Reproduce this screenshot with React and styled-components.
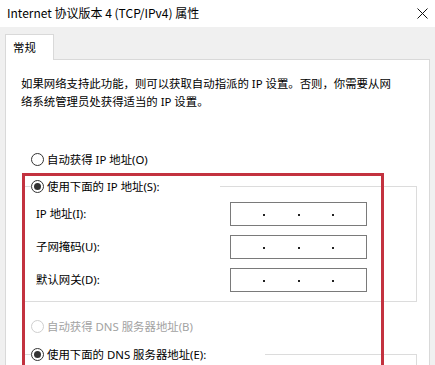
import React from "react";
import styled, { createGlobalStyle } from "styled-components";

const Global = createGlobalStyle`
  html, body { margin: 0; padding: 0; }
  body {
    background: #f0f0f0;
    font-family: "Noto Sans", "Noto Sans CJK SC", sans-serif;
    font-size: 11.4px;
    color: #000;
  }
`;

const Window = styled.div`
  position: relative;
  width: 435px;
  background: #f0f0f0;
  overflow: hidden;
`;

const TitleBar = styled.div`
  height: 27px;
  background: #fff;
  display: flex;
  align-items: center;
  justify-content: space-between;
  padding: 0 7px;
  box-sizing: border-box;
`;

const Title = styled.span`
  font-family: "Noto Sans CJK SC", sans-serif;
  font-size: 12px;
  line-height: 16px;
  color: #000;
  margin-top: -1px;
`;

const CloseIcon = styled.svg`
  width: 11px;
  height: 11px;
  display: block;
`;

const TabStrip = styled.div`
  display: flex;
  padding: 7px 5px 0;
`;

const Tab = styled.div`
  position: relative;
  z-index: 1;
  width: 49px;
  height: 26px;
  box-sizing: border-box;
  margin-bottom: -1px;
  padding: 5px 0 0 7px;
  background: #fff;
  border: 1px solid #d9d9d9;
  border-bottom: none;
  line-height: 16px;
`;

const Panel = styled.div`
  margin: 0 5px;
  border: 1px solid #d9d9d9;
  background: #fff;
  padding: 15px 12px 30px 15px;
`;

const Description = styled.p`
  margin: 0;
  line-height: 18px;
`;

const RadioRow = styled.label`
  display: flex;
  align-items: center;
  height: 20px;
  margin: ${(p) => p.$mt || 0}px 0 0 ${(p) => p.$ml || 0}px;
  color: ${(p) => (p.$disabled ? "#a2a2a2" : "#000")};
  background: ${(p) => (p.$legend ? "#fff" : "transparent")};
  width: ${(p) => (p.$width ? `${p.$width}px` : "auto")};
`;

const Circle = styled.span`
  box-sizing: border-box;
  width: 13px;
  height: 13px;
  border-radius: 50%;
  border: 1px solid ${(p) => (p.$disabled ? "#cfcfcf" : "#333")};
  margin-right: 3px;
  display: flex;
  align-items: center;
  justify-content: center;
  flex: none;
  &::after {
    content: "";
    display: ${(p) => (p.$checked ? "block" : "none")};
    width: 7px;
    height: 7px;
    border-radius: 50%;
    background: #333;
  }
`;

const Group = styled.fieldset`
  margin: ${(p) => p.$mt}px 0 0 3px;
  padding: 0 0 ${(p) => p.$pb}px 6px;
  border: 1px solid #dcdcdc;
  min-inline-size: 0;
`;

const Legend = styled.legend`
  padding: 0;
  margin: 0;
`;

const Fields = styled.div`
  display: grid;
  grid-template-columns: 1fr 137px;
  row-gap: 9px;
  align-items: center;
  margin: 6px 49px 0 5px;
`;

const FieldLabel = styled.span`
  line-height: 16px;
`;

const IpBox = styled.div`
  box-sizing: border-box;
  height: 24px;
  border: 1px solid #7a7a7a;
  background: #fff;
  display: flex;
  justify-content: space-evenly;
  align-items: center;
  padding-top: 2px;
`;

const Dot = styled.span`
  width: 2px;
  height: 2px;
  background: #222;
`;

const Highlight = styled.div`
  position: absolute;
  left: 22px;
  top: 173px;
  width: 362px;
  height: 320px;
  box-sizing: border-box;
  border: 3px solid #c3323f;
  pointer-events: none;
`;

function Radio({ children, checked, disabled, ...rest }) {
  return (
    <RadioRow $disabled={disabled} {...rest}>
      <Circle $checked={checked} $disabled={disabled} />
      <span>{children}</span>
    </RadioRow>
  );
}

function IpInput() {
  return (
    <IpBox>
      <Dot />
      <Dot />
      <Dot />
    </IpBox>
  );
}

export default function App() {
  return (
    <Window>
      <Global />
      <TitleBar>
        <Title>Internet 协议版本 4 (TCP/IPv4) 属性</Title>
        <CloseIcon viewBox="0 0 11 11">
          <path d="M0.5 0.5 L10.5 10.5 M10.5 0.5 L0.5 10.5" stroke="#111" strokeWidth="1" fill="none" />
        </CloseIcon>
      </TitleBar>
      <TabStrip>
        <Tab>常规</Tab>
      </TabStrip>
      <Panel>
        <Description>
          如果网络支持此功能，则可以获取自动指派的 IP 设置。否则，你需要从网
          <br />
          络系统管理员处获得适当的 IP 设置。
        </Description>
        <Radio $mt={38} $ml={10}>自动获得 IP 地址(O)</Radio>
        <Group $mt={7} $pb={9}>
          <Legend>
            <Radio checked $legend $width={189}>使用下面的 IP 地址(S):</Radio>
          </Legend>
          <Fields>
            <FieldLabel>IP 地址(I):</FieldLabel>
            <IpInput />
            <FieldLabel>子网掩码(U):</FieldLabel>
            <IpInput />
            <FieldLabel>默认网关(D):</FieldLabel>
            <IpInput />
          </Fields>
        </Group>
        <Radio disabled $mt={14} $ml={10}>自动获得 DNS 服务器地址(B)</Radio>
        <Group $mt={8} $pb={70}>
          <Legend>
            <Radio checked $legend $width={234}>使用下面的 DNS 服务器地址(E):</Radio>
          </Legend>
        </Group>
      </Panel>
      <Highlight />
    </Window>
  );
}
